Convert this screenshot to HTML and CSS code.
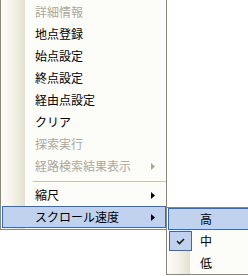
FILE: index.html
```html
<!DOCTYPE html>
<html lang="ja">
<head>
<meta charset="utf-8">
<link rel="stylesheet" href="styles.css">
</head>
<body>
<div class="menu main">
  <div class="item disabled"><span class="label">詳細情報</span></div>
  <div class="item"><span class="label">地点登録</span></div>
  <div class="item"><span class="label">始点設定</span></div>
  <div class="item"><span class="label">終点設定</span></div>
  <div class="item"><span class="label">経由点設定</span></div>
  <div class="item"><span class="label">クリア</span></div>
  <div class="item disabled"><span class="label">探索実行</span></div>
  <div class="item disabled"><span class="label">経路検索結果表示</span><svg class="arrow" width="4" height="7" viewBox="0 0 4 7"><polygon points="0,0 4,3.5 0,7"/></svg></div>
  <div class="sep"></div>
  <div class="item"><span class="label">縮尺</span><svg class="arrow" width="4" height="7" viewBox="0 0 4 7"><polygon points="0,0 4,3.5 0,7"/></svg></div>
  <div class="item hl"><span class="label">スクロール速度</span><svg class="arrow" width="4" height="7" viewBox="0 0 4 7"><polygon points="0,0 4,3.5 0,7"/></svg></div>
</div>
<div class="menu submenu">
  <div class="item hl"><span class="label">高</span></div>
  <div class="item checked">
    <span class="check"><svg width="9" height="7" viewBox="0 0 9 7"><polyline points="1,3 3.5,5.5 8,1" fill="none" stroke="#1a1a1a" stroke-width="1.6"/></svg></span>
    <span class="label">中</span>
  </div>
  <div class="item"><span class="label">低</span></div>
</div>
</body>
</html>
```
FILE: styles.css
```css
html, body {
  margin: 0;
  padding: 0;
  overflow: hidden;
  background: #ffffff;
}
body {
  width: 248px;
  height: 276px;
  position: relative;
  font-family: "Noto Sans CJK JP", "Noto Sans", sans-serif;
  font-size: 12px;
  color: #000;
}
.menu {
  box-sizing: border-box;
  border: 1px solid #8a867a;
  background: linear-gradient(to right, #fdfcf8 0, #f3f1e8 12px, #e4e0d0 24px, #fcfcf9 24px);
}
.main {
  width: 167px;
  border-top: none;
  padding: 1px 0;
}
.item {
  position: relative;
  box-sizing: border-box;
  height: 22px;
  margin-left: 1px;
  border: 1px solid transparent;
  display: flex;
  align-items: center;
  padding-left: 32px;
  line-height: 1;
}
.item .label {
  flex: 1;
  white-space: nowrap;
}
.item .arrow {
  margin-right: 10px;
  fill: #000;
}
.disabled {
  color: #aca899;
}
.disabled .arrow {
  fill: #aca899;
}
.hl {
  background: #c1d2ee;
  border-color: #316ac5;
}
.submenu .hl {
  border-right: none;
}
.sep {
  height: 7px;
  margin-left: 32px;
  display: flex;
  align-items: center;
}
.sep::before {
  content: "";
  display: block;
  width: 100%;
  height: 1px;
  background: #c5c2b2;
  margin-top: 1px;
}
.submenu {
  position: absolute;
  left: 166px;
  top: 207px;
  width: 82px;
  border-right: none;
  background: linear-gradient(to right, #fdfcf8 0, #f3f1e8 12px, #e4e0d0 23px, #fcfcf9 23px);
}
.submenu .item {
  padding-left: 31px;
}
.check {
  position: absolute;
  left: 0;
  top: 0;
  box-sizing: border-box;
  width: 23px;
  height: 20px;
  background: #c1d2ee;
  border: 1px solid #316ac5;
  display: flex;
  align-items: center;
  justify-content: center;
}
```
